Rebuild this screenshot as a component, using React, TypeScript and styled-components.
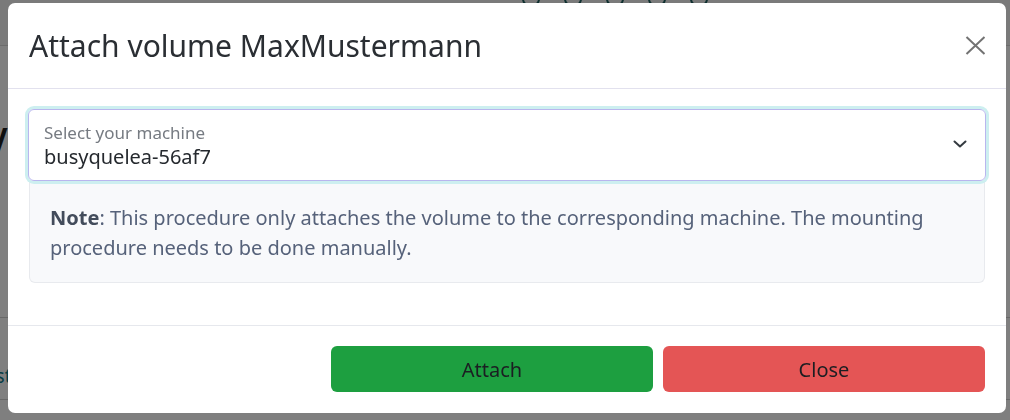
import React from 'react';
import styled, { createGlobalStyle } from 'styled-components';

const GlobalStyle = createGlobalStyle`
  html, body {
    margin: 0;
    padding: 0;
    background: #ffffff;
    font-family: "Noto Sans", "Open Sans", sans-serif;
    overflow: hidden;
  }
`;

const Page = styled.div`
  width: 1010px;
  height: 420px;
  background: #ffffff;
  display: flex;
  flex-direction: column;
`;

const NavBar = styled.div`
  height: 45px;
  border-bottom: 1px solid #d8d8d8;
  background: #f4f4f4;
  display: flex;
  gap: 24px;
  padding-left: 522px;
`;

const NavIcon = styled.span`
  width: 14px;
  height: 12px;
  margin-top: -9px;
  border-radius: 50%;
  border: 2px solid #1c5e5e;
`;

const PageTitle = styled.h1`
  margin: 74px 0 0 -14px;
  font-size: 34px;
  font-weight: 600;
  color: #1e1e1e;
  line-height: 40px;
`;

const Row = styled.div`
  margin-top: 157px;
  height: 83px;
  border-top: 1px solid #d0d0d0;
  border-bottom: 1px solid #d0d0d0;
  display: flex;
  align-items: flex-end;
  padding-bottom: 10px;
  box-sizing: border-box;
`;

const RowLink = styled.span`
  margin-left: -30px;
  color: #0f7a8a;
  font-size: 19px;
`;

const Overlay = styled.div`
  position: fixed;
  inset: 0;
  background: rgba(0, 0, 0, 0.5);
  display: flex;
  align-items: flex-start;
  padding: 3px 0 0 8px;
`;

const Modal = styled.div`
  width: 998px;
  height: 410px;
  background: #ffffff;
  border-radius: 7px;
  display: flex;
  flex-direction: column;
  box-sizing: border-box;
  overflow: hidden;
`;

const Header = styled.div`
  height: 86px;
  box-sizing: border-box;
  border-bottom: 1px solid #e2e1ee;
  display: flex;
  align-items: center;
  justify-content: space-between;
  padding: 0 20px 0 21px;
`;

const Title = styled.h2`
  margin: 0;
  font-size: 30px;
  font-weight: 400;
  line-height: 1.2;
  color: #2a2e33;
`;

const CloseButton = styled.button`
  border: none;
  background: none;
  padding: 0;
  width: 22px;
  height: 22px;
  display: flex;
  align-items: center;
  justify-content: center;
  cursor: pointer;
`;

const Body = styled.div`
  padding: 20px 20px 0 20px;
  flex: 1;
`;

const SelectBox = styled.div`
  position: relative;
  box-sizing: border-box;
  height: 72px;
  border: 1px solid #b9b6ee;
  border-radius: 6px;
  box-shadow: 0 0 0 3px #cdeff0;
  padding: 13px 40px 0 15px;
  display: flex;
  flex-direction: column;
`;

const SelectLabel = styled.span`
  font-size: 17px;
  line-height: 20px;
  color: #767b82;
`;

const SelectValue = styled.span`
  font-size: 20px;
  line-height: 28px;
  color: #25292e;
`;

const Chevron = styled.svg`
  position: absolute;
  right: 18px;
  top: 30px;
`;

const NoteBox = styled.div`
  margin: 0 1px;
  background: #f8f9fb;
  border: 1px solid #e8eaee;
  border-top: none;
  border-radius: 0 0 6px 6px;
  padding: 22px 20px 18px 20px;
  font-size: 20px;
  line-height: 30px;
  color: #56627a;
  height: 102px;
  box-sizing: border-box;
`;

const NoteLead = styled.strong`
  font-weight: 700;
  color: #434c5b;
`;

const Footer = styled.div`
  height: 88px;
  box-sizing: border-box;
  border-top: 1px solid #e6e8ed;
  display: flex;
  justify-content: flex-end;
  gap: 10px;
  padding: 20px 21px 0 0;
`;

const ActionButton = styled.button<{ $variant: 'attach' | 'close' }>`
  width: 322px;
  height: 46px;
  border: none;
  border-radius: 6px;
  font-family: inherit;
  font-size: 20px;
  color: #1b1e22;
  background: ${p => (p.$variant === 'attach' ? '#1d9f40' : '#e45555')};
  cursor: pointer;
`;

const App: React.FC = () => {
  return (
    <>
      <GlobalStyle />
      <Page>
        <NavBar>
          {[0, 1, 2, 3, 4].map(i => (
            <NavIcon key={i} />
          ))}
        </NavBar>
        <PageTitle>Volumes</PageTitle>
        <Row>
          <RowLink>Host</RowLink>
        </Row>
      </Page>
      <Overlay>
        <Modal>
          <Header>
            <Title>Attach volume MaxMustermann</Title>
            <CloseButton aria-label="Close">
              <svg width="21" height="19" viewBox="0 0 21 19">
                <path d="M1.5 1 L19.5 18 M19.5 1 L1.5 18" stroke="#737373" strokeWidth="2" fill="none" />
              </svg>
            </CloseButton>
          </Header>
          <Body>
            <SelectBox>
              <SelectLabel>Select your machine</SelectLabel>
              <SelectValue>busyquelea-56af7</SelectValue>
              <Chevron width="14" height="8" viewBox="0 0 14 8">
                <polyline points="1.5,1.5 7,6.5 12.5,1.5" stroke="#343a40" strokeWidth="2" fill="none" strokeLinecap="round" strokeLinejoin="round" />
              </Chevron>
            </SelectBox>
            <NoteBox>
              <NoteLead>Note</NoteLead>: This procedure only attaches the volume to the corresponding machine. The
              mounting procedure needs to be done manually.
            </NoteBox>
          </Body>
          <Footer>
            <ActionButton $variant="attach">Attach</ActionButton>
            <ActionButton $variant="close">Close</ActionButton>
          </Footer>
        </Modal>
      </Overlay>
    </>
  );
};

export default App;
